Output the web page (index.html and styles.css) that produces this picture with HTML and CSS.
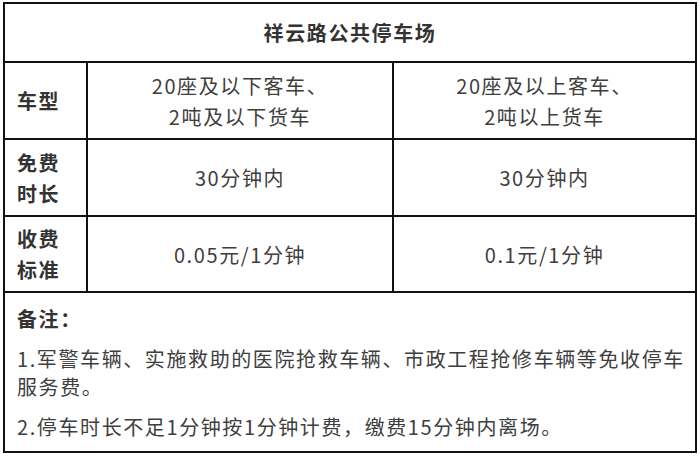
FILE: index.html
```html
<!DOCTYPE html>
<html lang="zh-CN">
<head>
<meta charset="utf-8">
<title>祥云路公共停车场</title>
<link rel="stylesheet" href="styles.css">
</head>
<body>
<div class="fee-table">
  <div class="cell title">祥云路公共停车场</div>

  <div class="cell label">车型</div>
  <div class="cell value">20座及以下客车、<br>2吨及以下货车</div>
  <div class="cell value">20座及以上客车、<br>2吨以上货车</div>

  <div class="cell label">免费<br>时长</div>
  <div class="cell value">30分钟内</div>
  <div class="cell value">30分钟内</div>

  <div class="cell label">收费<br>标准</div>
  <div class="cell value">0.05元/1分钟</div>
  <div class="cell value">0.1元/1分钟</div>

  <div class="cell notes">
    <p class="note-head">备注：</p>
    <p class="note">1.军警车辆、实施救助的医院抢救车辆、市政工程抢修车辆等免收停车<br>服务费。</p>
    <p class="note">2.停车时长不足1分钟按1分钟计费，缴费15分钟内离场。</p>
  </div>
</div>
</body>
</html>
```
FILE: styles.css
```css
html, body {
  margin: 0;
  padding: 0;
  background: #ffffff;
}

body {
  padding: 2px 0 0 3px;
  font-family: "Noto Sans CJK SC", "Noto Sans", sans-serif;
  color: #3e3e3e;
  font-size: 20px;
  letter-spacing: 1.6px;
}

.fee-table {
  width: 694px;
  box-sizing: border-box;
  display: grid;
  grid-template-columns: 83px 306px 303px;
  grid-template-rows: 59px 77px 77px 76px 160px;
  border-top: 2px solid #111;
  border-left: 2px solid #111;
}

.cell {
  box-sizing: border-box;
  border-right: 2px solid #111;
  border-bottom: 2px solid #111;
  display: flex;
  align-items: center;
  line-height: 31px;
}

.title {
  grid-column: 1 / 4;
  justify-content: center;
  font-weight: bold;
  color: #333;
}

.label {
  padding-left: 12px;
  font-weight: bold;
  color: #333;
}

.value {
  justify-content: center;
  text-align: center;
}

.notes {
  grid-column: 1 / 4;
  display: block;
  padding: 12px 8px 0 12px;
  line-height: 28px;
}

.notes p {
  margin: 0 0 12px 0;
}

.note-head {
  font-weight: bold;
  color: #333;
}
```
